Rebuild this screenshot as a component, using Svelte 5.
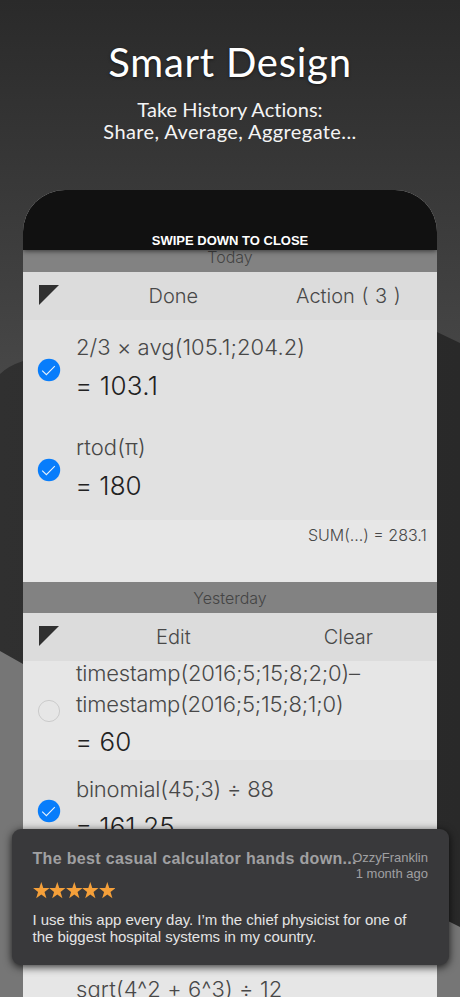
<script>
  const today = [
    { lines: [['2/3 × avg(105.1;204.2)', 0.08]], result: '= 103.1', spacing: 0.35, checked: true },
    { lines: [['rtod(π)', 0.1]], result: '= 180', spacing: 0.1, checked: true }
  ];
  const yesterday = [
    { lines: [['timestamp(2016;5;15;8;2;0)–', -0.19], ['timestamp(2016;5;15;8;1;0)', -0.22]], result: '= 60', spacing: 0.2, checked: false },
    { lines: [['binomial(45;3) ÷ 88', -0.2]], result: '= 161.25', spacing: 0.1, checked: true, low: true },
    { lines: [], result: '', spacing: 0, checked: false },
    { lines: [['sqrt(4^2 + 6^3) ÷ 12', 0.15]], result: '', spacing: 0, checked: false, low: true }
  ];
  const stars = [0, 1, 2, 3, 4];
</script>

{#snippet toolbar(left, right, wide)}
  <div class="toolbar">
    <svg class="corner" width="20" height="20" viewBox="0 0 20 20"><path d="M0 0H20L0 20Z" fill="#303030" /></svg>
    <span class="tool">{left}</span>
    <span class="tool" class:wide>{right}</span>
  </div>
{/snippet}

{#snippet entry(row)}
  <div class="row" class:selected={row.checked} class:double={row.lines.length > 1} class:low={row.low}>
    <div class="mark">
      {#if row.checked}
        <svg width="24" height="24" viewBox="0 0 24 24">
          <circle cx="12" cy="12" r="11.2" fill="#087dfb" />
          <path d="M5.2 12.6L9.4 16.7L17.8 8.2" fill="none" stroke="#e8f2fc" stroke-width="1.1" />
        </svg>
      {:else if row.lines.length > 1}
        <svg width="24" height="24" viewBox="0 0 24 24"><circle cx="12" cy="12" r="10.6" fill="none" stroke="#cbcbcb" stroke-width="1" /></svg>
      {/if}
    </div>
    <div class="body">
      {#each row.lines as line}
        <div class="expr" style="letter-spacing: {line[1]}px">{line[0]}</div>
      {/each}
      <div class="result" style="letter-spacing: {row.spacing}px">{row.result}</div>
    </div>
  </div>
{/snippet}

<main>
  <svg class="backdrop" width="460" height="997" viewBox="0 0 460 997">
    <defs>
      <linearGradient id="sky" x1="0" y1="0" x2="0" y2="1"><stop offset="0" stop-color="#2a2a2a" /><stop offset="1" stop-color="#474747" /></linearGradient>
      <linearGradient id="hex" x1="0" y1="0" x2="1" y2="0"><stop offset="0" stop-color="#303030" /><stop offset="1" stop-color="#292929" /></linearGradient>
    </defs>
    <rect width="460" height="997" fill="#767676" />
    <path d="M0 0H460V927L448 921L23 664L0 651Z" fill="url(#hex)" />
    <path d="M0 0H460V343L437 332H100L23 361Q8 366 0 374Z" fill="url(#sky)" />
  </svg>

  <header>
    <h1>Smart Design</h1>
    <p class="first">Take History Actions:</p>
    <p class="second">Share, Average, Aggregate...</p>
  </header>

  <section class="phone">
    <div class="close">SWIPE DOWN TO CLOSE</div>
    <div class="day clipped"><span>Today</span></div>
    {@render toolbar('Done', 'Action ( 3 )', true)}
    {#each today as row}{@render entry(row)}{/each}
    <div class="sum"><span>SUM(...) = 283.1</span></div>
    <div class="day"><span>Yesterday</span></div>
    {@render toolbar('Edit', 'Clear', false)}
    {#each yesterday as row}{@render entry(row)}{/each}
  </section>

  <article class="review">
    <div class="top">
      <h2>The best casual calculator hands down...</h2>
      <div class="by">OzzyFranklin<br />1 month ago</div>
    </div>
    <div class="stars">
      {#each stars as s (s)}
        <svg width="16.6" height="17" viewBox="0 0 16.7 17"><path d="M8.35 0L10.35 6.1H16.6L11.6 9.9L13.5 16.2L8.35 12.4L3.2 16.2L5.1 9.9L.1 6.1H6.35Z" fill="#f5a03a" /></svg>
      {/each}
    </div>
    <p>I use this app every day. I’m the chief physicist for one of<br />the biggest hospital systems in my country.</p>
  </article>
</main>

<style>
  :global(body) { margin: 0; background: #333; }
  main {
    position: relative;
    width: 460px;
    height: 997px;
    overflow: hidden;
    display: flex;
    flex-direction: column;
    font-family: Inter, "Liberation Sans", sans-serif;
  }
  svg { display: block; }
  .backdrop { position: absolute; inset: 0; }
  header {
    position: relative;
    height: 190px;
    flex: none;
    box-sizing: border-box;
    padding-top: 38px;
    text-align: center;
    color: #fff;
    font-family: Lato, sans-serif;
    font-variant-ligatures: none;
  }
  h1 { margin: 0; font-size: 40px; line-height: 48px; font-weight: 400; letter-spacing: 0.75px; text-shadow: 0 1px 3px #0008; }
  header p { margin: 0; font-size: 20px; line-height: 22px; color: #f4f4f4; }
  header p.first { margin-top: 12px; letter-spacing: 0.05px; }
  header p.second { letter-spacing: 0.4px; }
  .phone {
    position: relative;
    width: 413.3px;
    height: 807px;
    flex: none;
    margin-left: 23.4px;
    overflow: hidden;
    border-radius: 42px 42px 0 0;
    background: #e6e6e6;
    color: #484848;
  }
  .close {
    position: relative;
    height: 60px;
    box-sizing: border-box;
    padding-top: 43px;
    background: #111;
    box-shadow: 0 1px 5px #0009;
    color: #fff;
    font: bold 13px/16px "Liberation Sans", sans-serif;
    text-align: center;
  }
  .day {
    height: 31px;
    background: #828282;
    display: flex;
    justify-content: center;
    align-items: center;
    font-size: 16px;
    font-weight: 300;
    line-height: 20px;
    color: #444;
  }
  .day.clipped { height: 22px; align-items: flex-start; }
  .clipped span { margin-top: -3px; }
  .toolbar {
    height: 48px;
    background: #dcdcdc;
    display: flex;
    align-items: center;
    font-size: 20px;
    font-weight: 300;
  }
  .corner { margin: -2px 0 0 15.5px; width: 20px; }
  .tool { width: 175px; text-align: center; }
  .tool.wide { word-spacing: 1px; }
  .corner + .tool { margin-left: 27px; }
  .row {
    height: 100px;
    display: flex;
    background: #e6e6e6;
    font-weight: 300;
  }
  .row.selected { background: #e1e1e1; }
  .mark { width: 52.5px; padding: 38px 0 0 13.6px; box-sizing: border-box; }
  .body { padding-top: 12px; white-space: nowrap; }
  .low .mark { padding-top: 39px; }
  .low .body { padding-top: 14px; }
  .expr { font-size: 22px; line-height: 31px; }
  .result { font-size: 26px; line-height: 46px; color: #222; word-spacing: -0.5px; margin-left: -0.6px; }
  .low .result { line-height: 43px; }
  .double .result { line-height: 44px; }
  .double { height: 99px; }
  .double .body { padding-top: 0; margin-top: -3px; }
  .sum { height: 62px; box-sizing: border-box; padding: 5px 10px 0 0; text-align: right; font-size: 16px; line-height: 20px; font-weight: 300; background: #e7e7e7; }
  .review {
    position: absolute;
    left: 12px;
    top: 829px;
    width: 437px;
    height: 136px;
    box-sizing: border-box;
    padding: 20px 21px 0 20.5px;
    border-radius: 9px;
    background: #39393b;
    box-shadow: 0 2px 8px #000c;
    font-family: "Liberation Sans", sans-serif;
  }
  .top { display: flex; justify-content: space-between; height: 33px; white-space: nowrap; }
  h2 { margin: 0; width: 300px; font-size: 16px; line-height: 20px; letter-spacing: 0.33px; color: #a0a0a2; }
  .by { font-size: 13px; line-height: 16px; color: #a0a0a2; text-align: right; padding-top: 1px; }
  .stars { display: flex; height: 29px; }
  .review p { margin: 0; font-size: 15px; line-height: 17px; letter-spacing: -0.03px; color: #e4e4e4; white-space: nowrap; }
</style>
